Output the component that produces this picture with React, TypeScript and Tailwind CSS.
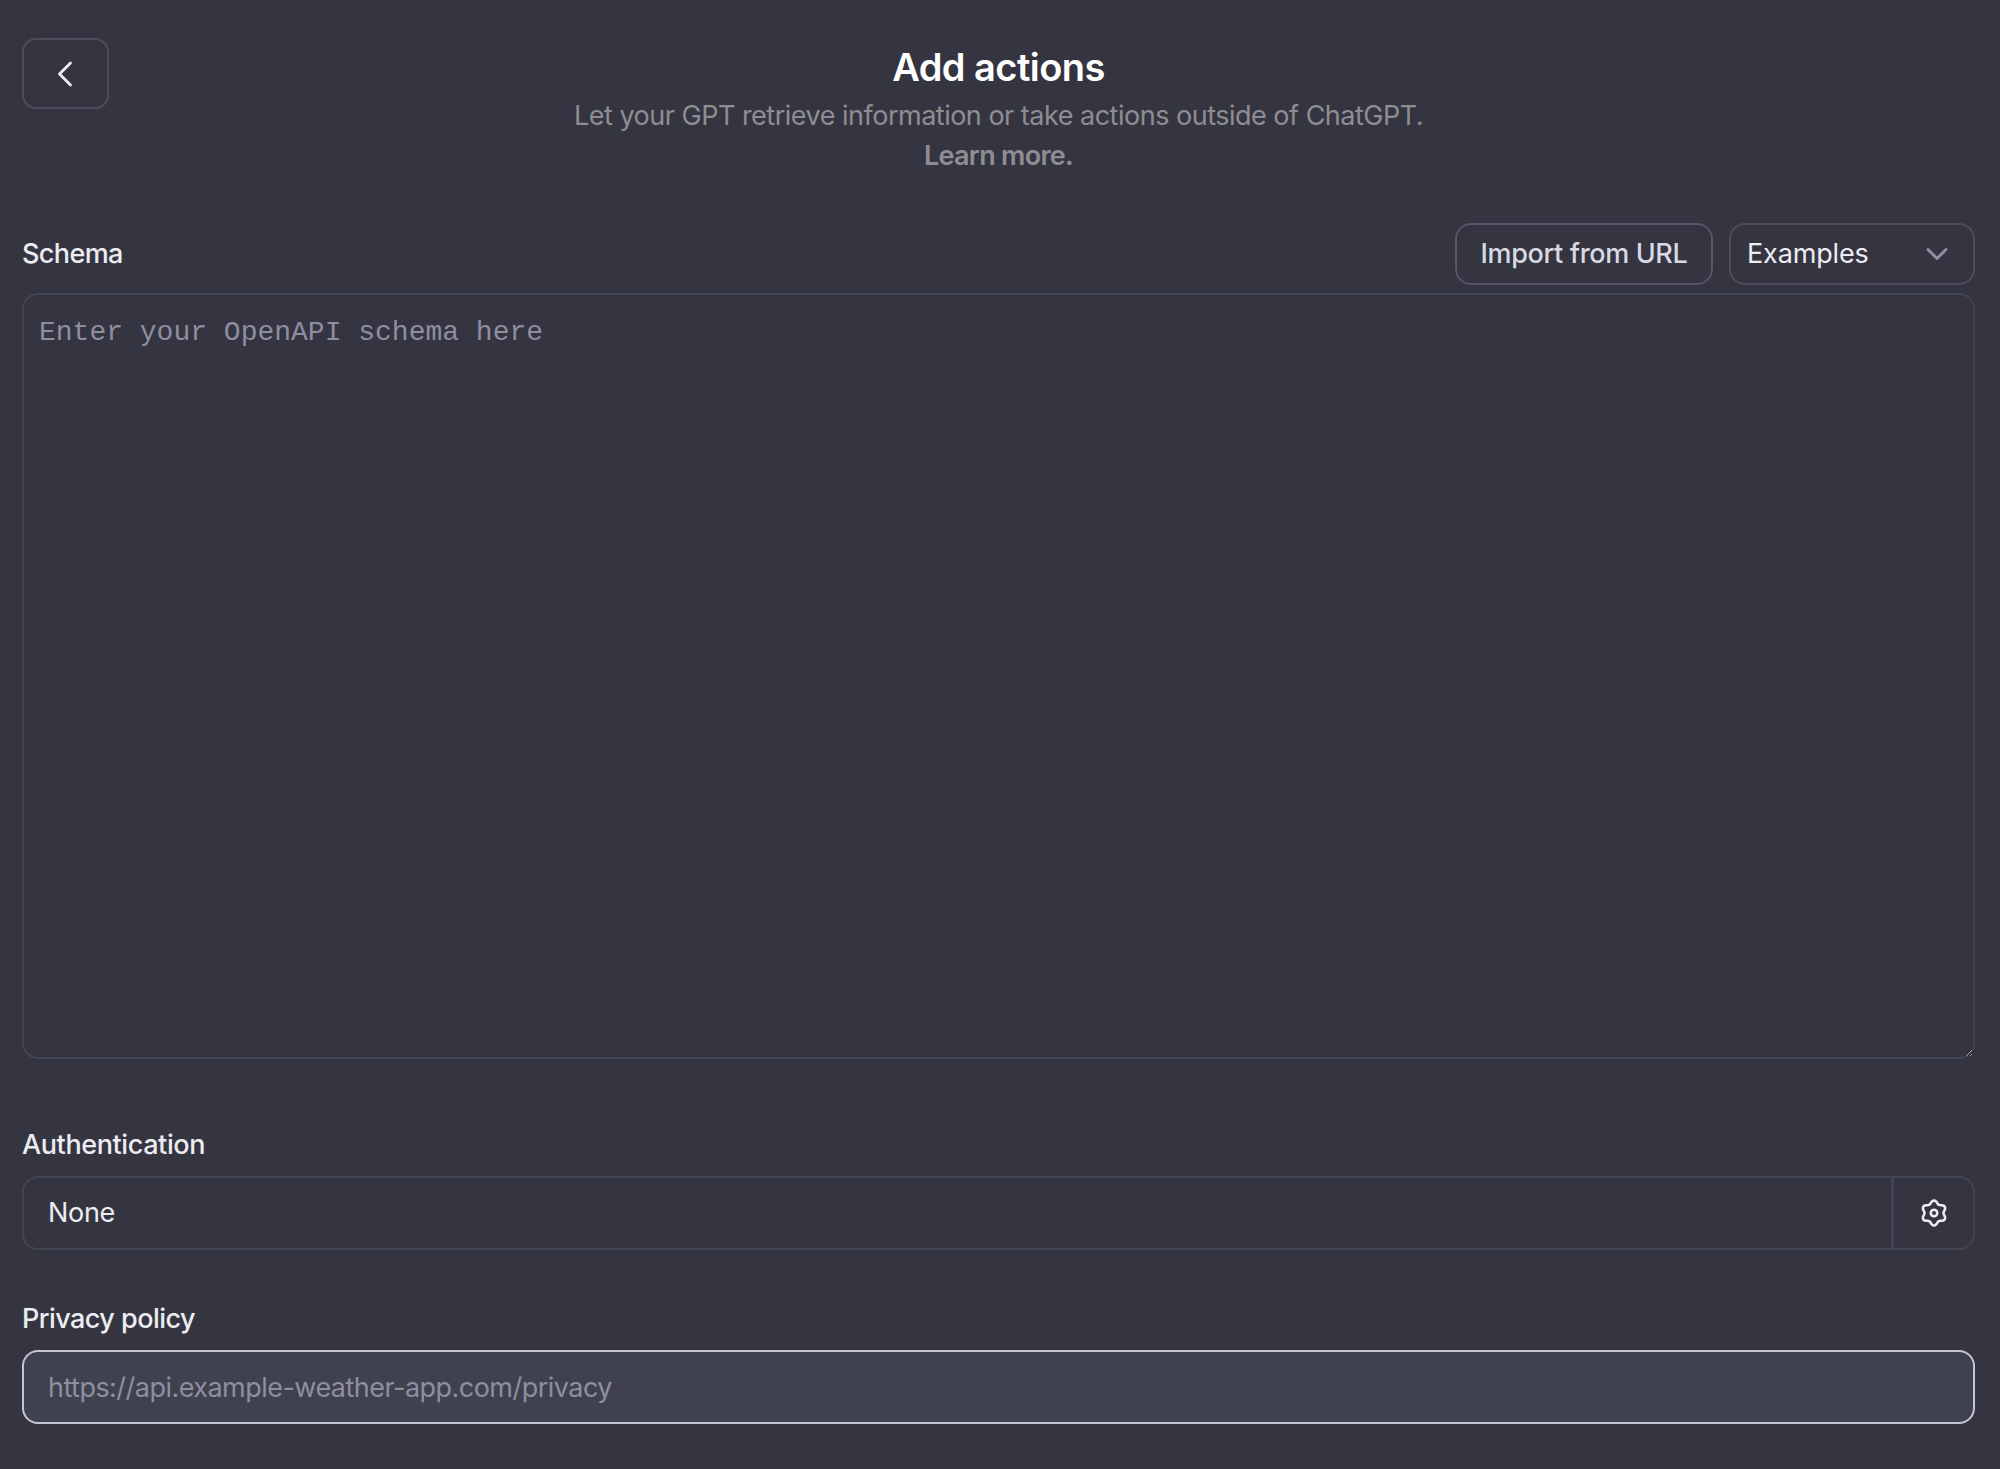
import { ChevronDown, ChevronLeft } from 'lucide-react';

// Six-lobed settings outline, traced as r = R + a*cos(6t)
function gearPath() {
  const points: string[] = [];
  for (let i = 0; i < 72; i++) {
    const t = (i / 72) * Math.PI * 2;
    const r = 9.4 + 1.3 * Math.cos(6 * t);
    const x = 12 + r * Math.sin(t);
    const y = 12 - r * Math.cos(t);
    points.push(`${i === 0 ? 'M' : 'L'}${x.toFixed(2)} ${y.toFixed(2)}`);
  }
  return points.join(' ') + ' Z';
}

function GearIcon() {
  return (
    <svg width="28" height="28" viewBox="0 0 24 24" fill="none" stroke="#ececf1" strokeWidth="2.2">
      <path d={gearPath()} strokeLinejoin="round" />
      <circle cx="12" cy="12" r="2.8" />
    </svg>
  );
}

export default function App() {
  return (
    <div className="h-[1469px] w-full overflow-hidden bg-[#343541] pl-[22px] pr-[25px] pt-[38px] font-['Inter',sans-serif]">
      {/* Header */}
      <div className="grid grid-cols-[1fr_auto_1fr]">
        <button className="flex h-[71px] w-[87px] items-center justify-center rounded-[14px] border-2 border-[#4d4d5b] text-[#ececf1]">
          <ChevronLeft size={44} strokeWidth={1.5} className="-ml-[2px]" />
        </button>
        <div className="flex flex-col items-center pt-[6px]">
          <h1 className="text-[38px] font-semibold leading-[46px] tracking-[-0.55px] text-white">Add actions</h1>
          <p className="mt-[6px] text-[27px] leading-[40px] tracking-[-0.5px] text-[#8e8e92]">
            Let your GPT retrieve information or take actions outside of ChatGPT.
          </p>
          <a className="text-[27px] font-semibold leading-[40px] tracking-[-0.7px] text-[#8e8e92]">Learn more.</a>
        </div>
        <div />
      </div>

      {/* Schema */}
      <div className="mt-[47px] flex h-[62px] items-center justify-between">
        <label className="text-[27px] font-medium tracking-[-0.6px] text-[#ececf1]">Schema</label>
        <div className="flex gap-[16px]">
          <button className="flex h-[62px] w-[258px] items-center justify-center rounded-[16px] border-2 border-[#565666] text-[27px] font-medium tracking-[-0.35px] text-[#d9d9e3]">
            Import from URL
          </button>
          <button className="flex h-[62px] w-[246px] items-center justify-between rounded-[16px] border-2 border-[#4d4d5b] pl-[16px] pr-[18px] text-[27px] tracking-[-0.15px] text-[#ececf1]">
            Examples
            <ChevronDown size={36} strokeWidth={2} className="text-[#8e8ea0]" />
          </button>
        </div>
      </div>
      <textarea
        placeholder="Enter your OpenAPI schema here"
        className="mt-[8px] block h-[766px] w-full rounded-[16px] border-2 border-[#444553] bg-transparent px-[15px] py-[18px] font-['Liberation_Mono',monospace] text-[28px] leading-[40px] text-[#ececf1] outline-none placeholder:text-[#8e8ea0]"
      />

      {/* Authentication */}
      <label className="mt-[68px] block text-[27px] font-medium leading-[36px] tracking-[-0.4px] text-[#ececf1]">Authentication</label>
      <div className="mt-[13px] flex h-[74px] rounded-[16px] border-2 border-[#444553]">
        <div className="flex flex-1 items-center border-r-[3px] border-[#444553] px-[24px] pt-[1px] text-[27px] tracking-[-0.3px] text-[#ececf1]">None</div>
        <button className="flex w-[79px] items-center justify-center">
          <GearIcon />
        </button>
      </div>

      {/* Privacy policy */}
      <label className="mt-[51px] block text-[27px] font-medium leading-[36px] tracking-[-0.55px] text-[#ececf1]">Privacy policy</label>
      <input
        placeholder="https://api.example-weather-app.com/privacy"
        className="mt-[13px] block h-[74px] w-full rounded-[16px] border-2 border-[#c5c5d2] bg-[#40414f] px-[24px] text-[27px] tracking-[-0.53px] text-[#ececf1] outline-none placeholder:text-[#8e8ea0]"
      />
    </div>
  );
}
